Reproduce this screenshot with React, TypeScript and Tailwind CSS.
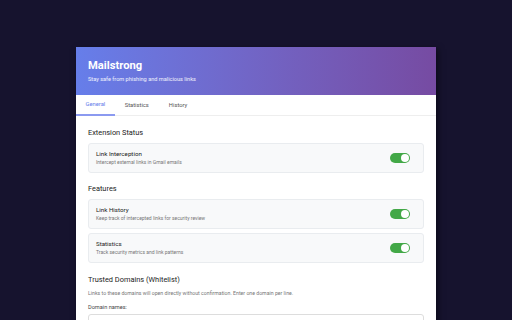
import React from "react";

function Toggle() {
  return (
    <div className="w-[20px] h-[10px] rounded-full bg-[#43a847] flex items-center justify-end px-[1px] shrink-0">
      <div className="w-[8px] h-[8px] rounded-full bg-white" />
    </div>
  );
}

function Row({ title, desc }: { title: string; desc: string }) {
  return (
    <div className="flex items-center justify-between h-[30px] px-[7px] bg-[#f8f9fa] border border-[#e9ecef] rounded-[3px]">
      <div className="flex flex-col gap-[1px] -mt-[1px]">
        <div className="text-[6.2px] leading-[8px] font-normal text-[#222]">{title}</div>
        <div className="text-[5px] leading-[6px] text-[#777]">{desc}</div>
      </div>
      <div className="pr-[6px]">
        <Toggle />
      </div>
    </div>
  );
}

export default function App() {
  return (
    <div
      className="w-[512px] h-[320px] bg-[#16132e] overflow-hidden pt-[47px]"
      style={{ fontFamily: "Roboto, 'Liberation Sans', sans-serif" }}
    >
      <div className="mx-auto w-[360px] h-[300px] bg-white shadow-[2px_2px_6px_rgba(0,0,0,0.5)]">
        <div className="h-[48px] px-[12px] pt-[12px] bg-gradient-to-r from-[#667eea] to-[#764ba2]">
          <div className="text-[11.2px] leading-[14px] font-bold text-white">Mailstrong</div>
          <div className="mt-[3px] text-[5.6px] leading-[7px] text-white/90">
            Stay safe from phishing and malicious links
          </div>
        </div>
        <div className="flex h-[21px] border-b border-[#eee]">
          <div className="px-[9.5px] flex items-center text-[5.8px] font-normal text-[#667eea] border-b-2 border-[#8b9af0] -mb-[1px]">
            General
          </div>
          <div className="px-[10px] flex items-center text-[5.8px] font-normal text-[#555]">Statistics</div>
          <div className="px-[10px] flex items-center text-[5.8px] font-normal text-[#555]">History</div>
        </div>
        <div className="px-[12px] pt-[12px]">
          <div className="text-[7.4px] leading-[9px] font-normal text-[#222] mb-[6px]">Extension Status</div>
          <div className="flex flex-col gap-[4px]">
            <Row title="Link Interception" desc="Intercept external links in Gmail emails" />
          </div>
          <div className="mt-[11px] text-[7.4px] leading-[9px] font-normal text-[#222] mb-[6px]">Features</div>
          <div className="flex flex-col gap-[4px]">
            <Row title="Link History" desc="Keep track of intercepted links for security review" />
            <Row title="Statistics" desc="Track security metrics and link patterns" />
          </div>
          <div className="mt-[12px] text-[7.4px] leading-[9px] font-normal text-[#222]">Trusted Domains (Whitelist)</div>
          <div className="mt-[6px] text-[5.2px] leading-[7px] text-[#777]">
            Links to these domains will open directly without confirmation. Enter one domain per line.
          </div>
          <div className="mt-[7px] text-[5.6px] leading-[7px] text-[#444]">Domain names:</div>
          <div className="mt-[3px] h-[40px] border border-[#ddd] rounded-[3px] bg-white" />
        </div>
      </div>
    </div>
  );
}
